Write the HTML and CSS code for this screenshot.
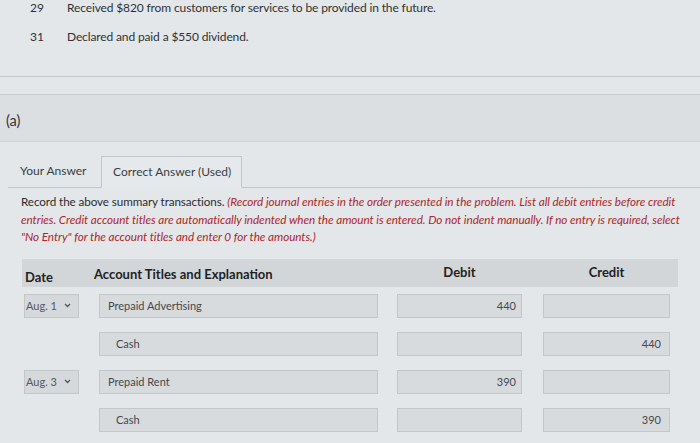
FILE: index.html
```html
<!DOCTYPE html>
<html>
<head>
<meta charset="utf-8">
<link rel="stylesheet" href="styles.css">
</head>
<body>
<div class="items">
  <div class="item"><span class="num">29</span><span class="desc">Received $820 from customers for services to be provided in the future.</span></div>
  <div class="item"><span class="num">31</span><span class="desc">Declared and paid a $550 dividend.</span></div>
</div>
<div class="sep"></div>
<div class="part"><span class="part-label">(a)</span></div>
<div class="tabs">
  <div class="tab">Your Answer</div>
  <div class="tab active">Correct Answer (Used)</div>
  <div class="tab-rest"></div>
</div>
<p class="instr">Record the above summary transactions. <em>(Record journal entries in the order presented in the problem. List all debit entries before credit entries. Credit account titles are automatically indented when the amount is entered. Do not indent manually. If no entry is required, select "No Entry" for the account titles and enter 0 for the amounts.)</em></p>
<div class="journal">
  <div class="jhead">
    <div class="h-date">Date</div>
    <div class="h-acct">Account Titles and Explanation</div>
    <div class="h-num">Debit</div>
    <div class="h-num">Credit</div>
  </div>
  <div class="jrow">
    <div class="sel">Aug. 1<svg class="chev" width="7" height="5" viewBox="0 0 7 5"><path d="M1 1 L3.5 3.5 L6 1" fill="none" stroke="#555" stroke-width="1.3"/></svg></div>
    <div class="inp acct">Prepaid Advertising</div>
    <div class="inp amt">440</div>
    <div class="inp amt cr"></div>
  </div>
  <div class="jrow">
    <div></div>
    <div class="inp acct credit">Cash</div>
    <div class="inp amt"></div>
    <div class="inp amt cr">440</div>
  </div>
  <div class="jrow">
    <div class="sel">Aug. 3<svg class="chev" width="7" height="5" viewBox="0 0 7 5"><path d="M1 1 L3.5 3.5 L6 1" fill="none" stroke="#555" stroke-width="1.3"/></svg></div>
    <div class="inp acct">Prepaid Rent</div>
    <div class="inp amt">390</div>
    <div class="inp amt cr"></div>
  </div>
  <div class="jrow">
    <div></div>
    <div class="inp acct credit">Cash</div>
    <div class="inp amt"></div>
    <div class="inp amt cr">390</div>
  </div>
</div>
</body>
</html>
```
FILE: styles.css
```css
* { box-sizing: border-box; }
html, body { margin: 0; padding: 0; }
body {
  width: 700px;
  height: 443px;
  overflow: hidden;
  background: #e4e7ea;
  font-family: Lato, "Open Sans", sans-serif;
  color: #2f3235;
}
.items { padding-top: 1px; height: 77px; border-bottom: 1px solid #c6c9cc; }
.item { display: flex; font-size: 12px; line-height: 14px; height: 29px; }
.num { width: 67px; padding-left: 30px; }
.desc { letter-spacing: -0.13px; }
.sep { height: 17px; }
.part {
  height: 48px;
  background: #dcdfe2;
  border-top: 1px solid #c9ccce;
  border-bottom: 1px solid #cfd2d4;
  padding: 18px 0 0 6px;
  font-size: 14.5px;
  line-height: 16px;
}
.tabs {
  display: flex;
  align-items: flex-end;
  margin-top: 13px;
  padding-left: 8px;
  height: 33px;
}
.tab {
  font-size: 12px;
  color: #3a3d40;
  height: 32px;
  line-height: 30px;
  border-bottom: 1px solid #c3c6c9;
  padding-left: 12px;
  width: 93px;
}
.tab.active {
  width: 141px;
  padding-left: 11px;
  border: 1px solid #c3c6c9;
  border-bottom: 1px solid transparent;
  background: #e6e9ec;
}
.tab-rest { flex: 1; border-bottom: 1px solid #c3c6c9; height: 1px; }
.instr {
  margin: 5px 0 0 21px;
  width: 664px;
  font-size: 11.7px;
  line-height: 17.5px;
  color: #2a2c2e;
  letter-spacing: -0.1px;
}
.instr em { color: #ac2529; font-style: italic; letter-spacing: -0.05px; }
.journal { margin: 13px 0 0 22px; width: 656px; }
.jhead {
  display: grid;
  grid-template-columns: 75px 298px 146px 127px;
  padding-left: 2px;
  height: 28px;
  background: #d3d6d8;
  font-weight: bold;
  font-size: 13px;
  color: #1f2123;
  align-items: center;
}
.h-date { padding-left: 1px; padding-top: 8px; }
.h-acct { margin-left: -5px; padding-top: 3px; }
.h-num { width: 125px; text-align: center; padding-bottom: 1px; }
.jhead .h-num:last-child { width: 127px; padding-bottom: 2px; }
.jrow {
  display: grid;
  grid-template-columns: 75px 298px 146px 127px;
  padding-left: 2px;
  margin-top: 14px;
  height: 24px;
  font-size: 11px;
  color: #45484b;
}
.jhead + .jrow { margin-top: 7px; }
.sel {
  width: 55px;
  height: 24px;
  background: #d6d9dc;
  border: 1px solid #c4c7ca;
  display: flex;
  align-items: center;
  justify-content: space-between;
  padding: 0 7px 0 1px;
  color: #55585b;
}
.chev { display: block; }
.inp {
  height: 24px;
  background: #d8dbde;
  border: 1px solid #c4c7ca;
  display: flex;
  align-items: center;
}
.acct { width: 279px; padding-left: 8px; }
.acct.credit { padding-left: 16px; }
.amt { width: 125px; justify-content: flex-end; padding-right: 5px; }
.amt.cr { width: 127px; padding-right: 8px; }
```
